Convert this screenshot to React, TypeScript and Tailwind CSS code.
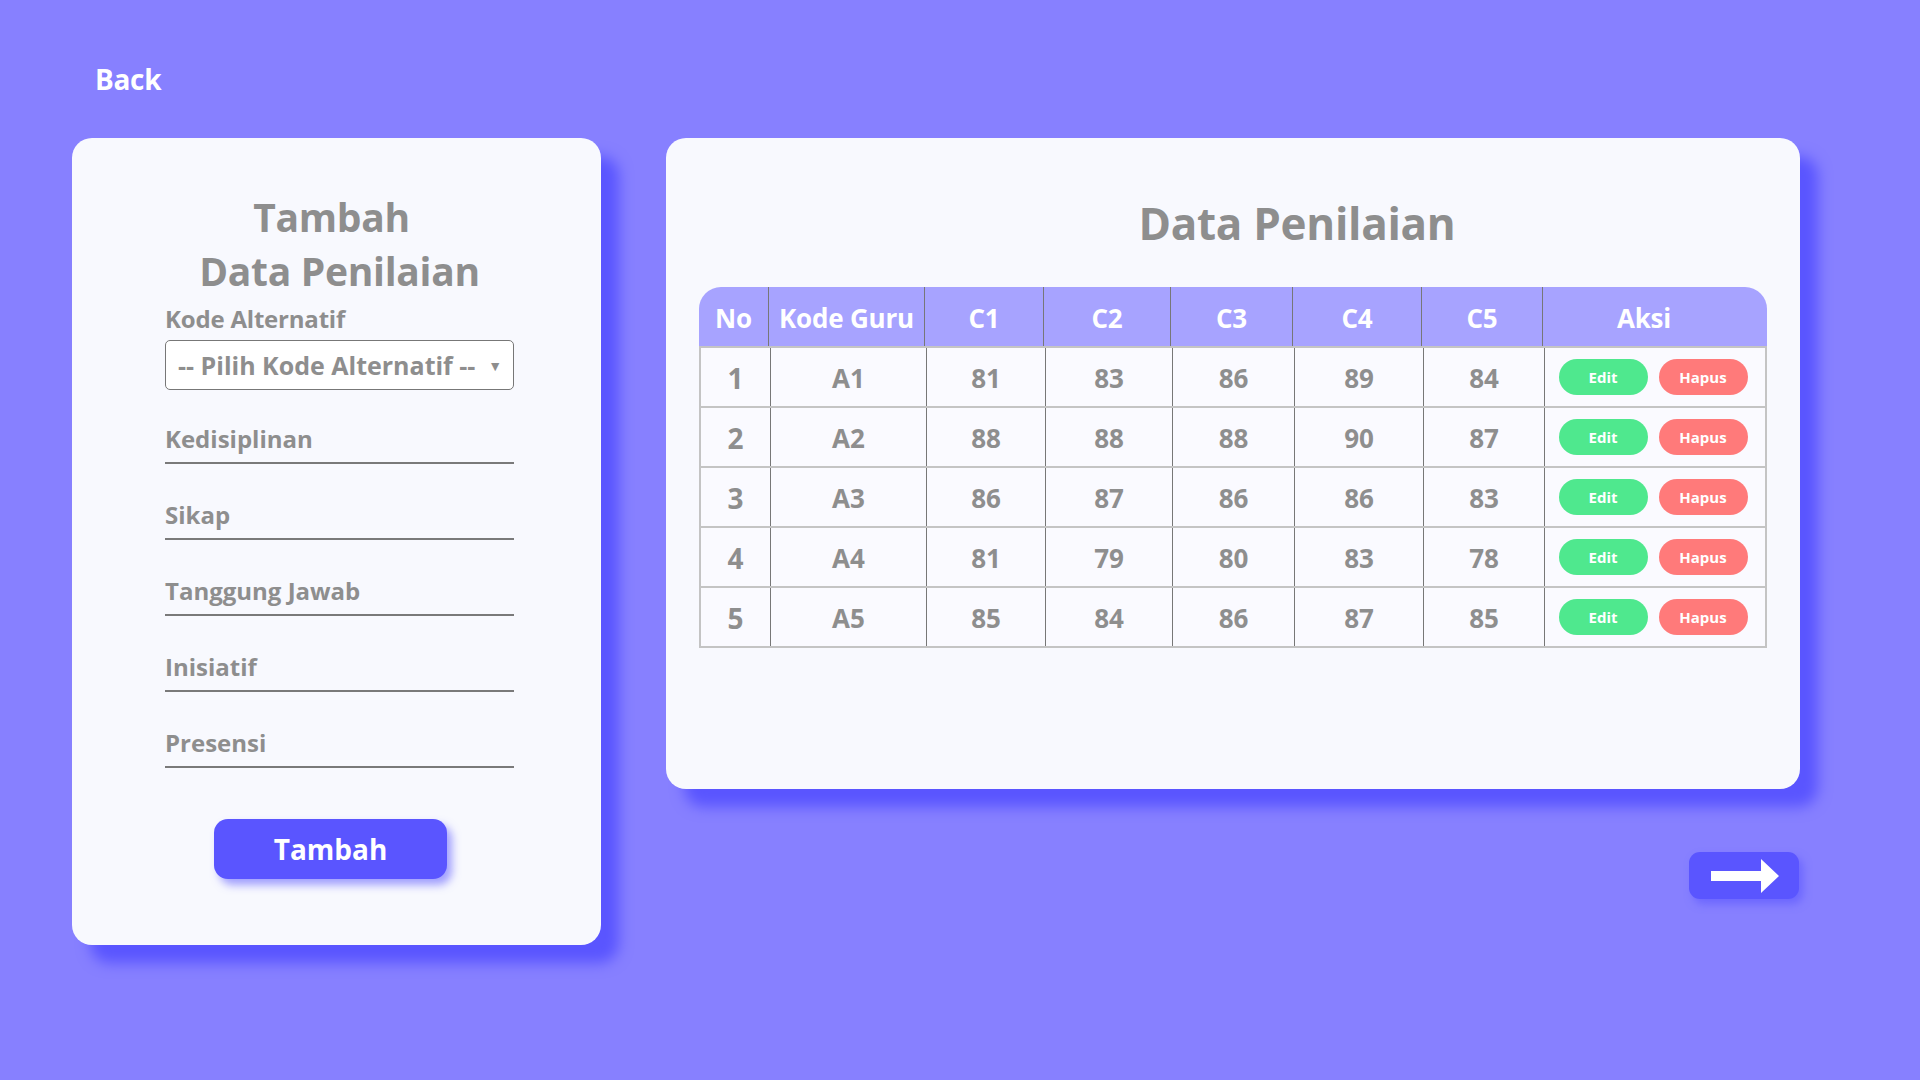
import React from 'react';

interface Penilaian {
  no: number;
  kode: string;
  nilai: number[];
}

const rows: Penilaian[] = [
  { no: 1, kode: 'A1', nilai: [81, 83, 86, 89, 84] },
  { no: 2, kode: 'A2', nilai: [88, 88, 88, 90, 87] },
  { no: 3, kode: 'A3', nilai: [86, 87, 86, 86, 83] },
  { no: 4, kode: 'A4', nilai: [81, 79, 80, 83, 78] },
  { no: 5, kode: 'A5', nilai: [85, 84, 86, 87, 85] },
];

const fields = ['Kedisiplinan', 'Sikap', 'Tanggung Jawab', 'Inisiatif', 'Presensi'];

const FormCard: React.FC = () => (
  <div className="w-[529px] h-[807px] rounded-[20px] bg-[#f8f9fe] shadow-[18px_18px_14px_#5a55ff] pt-[52px]">
    <div className="w-[349px] ml-[93px]">
      <h2 className="text-center text-[39px] leading-[54px] font-bold text-[#8e8e8e] tracking-[-0.3px]">
        <span className="block pr-[16px]">Tambah</span>
        <span className="block">Data Penilaian</span>
      </h2>
      <label className="block mt-[5px] text-[24px] leading-[32px] font-bold text-[#8e8e8e] tracking-[-0.2px]">
        Kode Alternatif
      </label>
      <div className="mt-[5px] h-[50px] rounded-[5px] border border-[#777] bg-white flex items-center pl-[12px] pr-[11px] text-[25px] font-bold text-[#8e8e8e]">
        <span className="pt-[2px]">-- Pilih Kode Alternatif --</span>
        <span className="ml-auto text-[14px]">▼</span>
      </div>
      <div className="mt-[24px] flex flex-col gap-[26px]">
        {fields.map((f) => (
          <div
            key={f}
            className="h-[50px] pb-[8px] flex items-end border-b-2 border-[#7a7a7a] text-[24px] leading-[30px] font-bold text-[#8e8e8e]"
          >
            {f}
          </div>
        ))}
      </div>
      <div className="mt-[51px] pl-[49px]">
        <button className="w-[233px] h-[60px] rounded-[14px] bg-[#5a55ff] text-white text-[28px] font-bold shadow-[5px_6px_8px_rgba(90,85,255,0.55)]">
          Tambah
        </button>
      </div>
    </div>
  </div>
);

const colWidths = ['w-[69px]', 'w-[156px]', 'w-[119px]', 'w-[127px]', 'w-[122px]', 'w-[129px]', 'w-[121px]', 'w-[223px]'];
const headers = ['No', 'Kode Guru', 'C1', 'C2', 'C3', 'C4', 'C5', 'Aksi'];

const TableCard: React.FC = () => (
  <div className="w-[1134px] h-[651px] rounded-[20px] bg-[#f8f9fe] shadow-[18px_18px_14px_#5a55ff] pt-[55px] px-[33px]">
    <h2 className="text-center pl-[128px] text-[44px] leading-[60px] font-bold text-[#8e8e8e] tracking-[-0.3px]">
      Data Penilaian
    </h2>
    <div className="mt-[34px] w-[1068px]">
      <div className="flex h-[61px] bg-[#a7a3ff] rounded-t-[22px] border-b-2 border-[#c4c4c4]">
        {headers.map((h, i) => (
          <div
            key={h}
            className={`${colWidths[i]} flex items-center justify-center pt-[4px] text-white text-[26px] font-bold tracking-[-0.2px] ${
              i > 0 ? 'border-l border-[#777]' : ''
            } ${h === 'Aksi' ? 'pr-[20px]' : ''}`}
          >
            {h}
          </div>
        ))}
      </div>
      {rows.map((r) => (
        <div key={r.no} className="flex h-[60px] bg-[#fafaff] border-x-2 border-b-2 border-[#c4c4c4]">
          <div className={`${colWidths[0]} flex items-center justify-center pt-[2px] text-[28px] font-bold text-[#8e8e8e]`}>
            {r.no}
          </div>
          <div
            className={`${colWidths[1]} flex items-center justify-center pt-[3px] text-[26px] font-bold text-[#8e8e8e] border-l border-[#777]`}
          >
            {r.kode}
          </div>
          {r.nilai.map((n, i) => (
            <div
              key={i}
              className={`${colWidths[i + 2]} flex items-center justify-center pt-[3px] text-[26px] font-bold text-[#8e8e8e] border-l border-[#777]`}
            >
              {n}
            </div>
          ))}
          <div className="flex-1 flex items-center justify-center gap-[11px] pr-[4px] border-l border-[#777]">
            <button className="w-[89px] h-[36px] rounded-full bg-[#4fe88e] text-white text-[15px] font-bold">Edit</button>
            <button className="w-[89px] h-[36px] rounded-full bg-[#ff7a7a] text-white text-[15px] font-bold">Hapus</button>
          </div>
        </div>
      ))}
    </div>
  </div>
);

export default function App() {
  return (
    <div
      className="w-[1920px] h-[1080px] bg-[#8780ff] overflow-hidden"
      style={{ fontFamily: '"Open Sans", "Noto Sans", sans-serif' }}
    >
      <div className="h-[138px] pl-[95px] pt-[59px]">
        <span className="text-white text-[28px] leading-[40px] font-bold tracking-[-0.3px]">Back</span>
      </div>
      <div className="flex pl-[72px] gap-[65px] items-start">
        <FormCard />
        <div className="flex flex-col items-end">
          <TableCard />
          <button className="mt-[63px] mr-[1px] w-[110px] h-[47px] rounded-[11px] bg-[#5a55ff] shadow-[4px_5px_8px_rgba(90,85,255,0.6)] flex items-center justify-center">
            <svg width="70" height="36" viewBox="0 0 70 36">
              <path d="M2 13 H52 V1 L70 18 L52 35 V23 H2 Z" fill="white" />
            </svg>
          </button>
        </div>
      </div>
    </div>
  );
}
